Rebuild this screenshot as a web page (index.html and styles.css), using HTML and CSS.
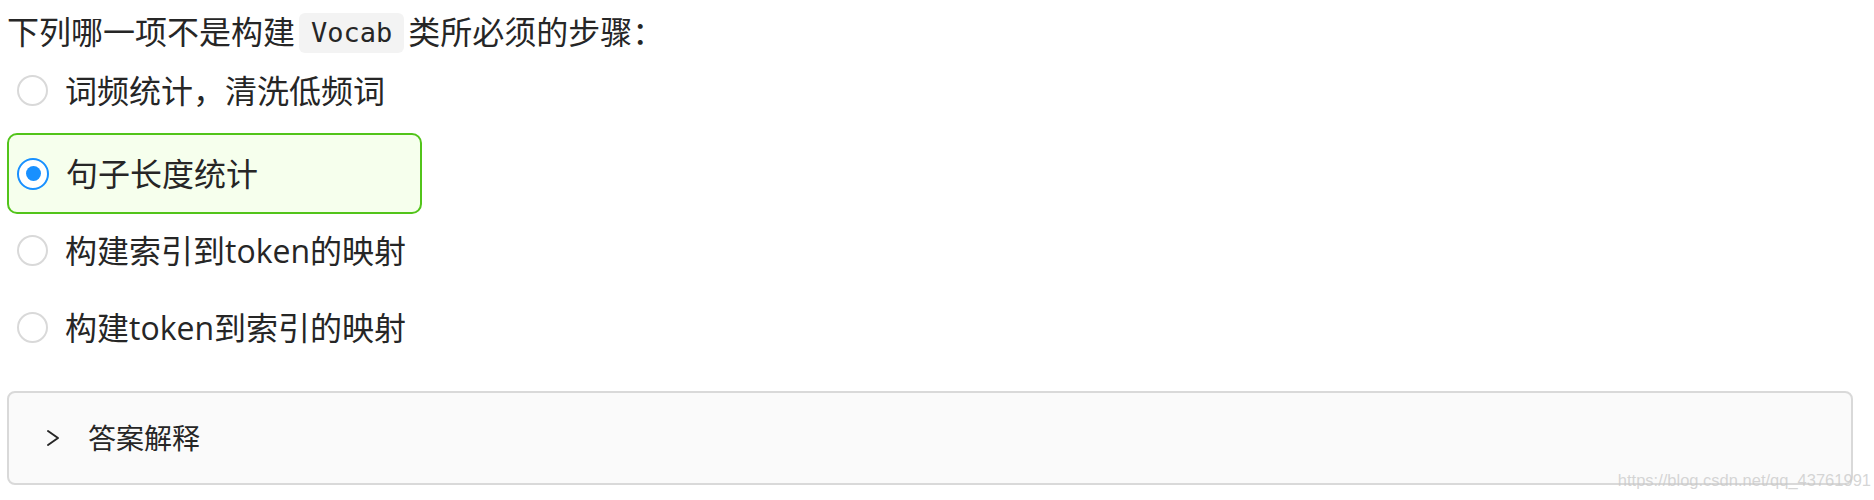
FILE: index.html
```html
<!DOCTYPE html>
<html lang="zh-CN">
<head>
<meta charset="utf-8">
<title>Quiz</title>
<link rel="stylesheet" href="styles.css">
</head>
<body>
<div class="quiz">
  <p class="question">下列哪一项不是构建<code class="code">Vocab</code>类所必须的步骤：</p>
  <div class="options">
    <label class="option"><span class="radio"></span><span class="option-text">词频统计，清洗低频词</span></label>
    <label class="option selected"><span class="radio"></span><span class="option-text">句子长度统计</span></label>
    <label class="option"><span class="radio"></span><span class="option-text">构建索引到token的映射</span></label>
    <label class="option"><span class="radio"></span><span class="option-text">构建token到索引的映射</span></label>
  </div>
  <div class="collapse">
    <div class="collapse-header">
      <svg class="chevron" width="16" height="18" viewBox="0 0 16 18"><polyline points="3,2 13,9 3,16" fill="none" stroke="#262626" stroke-width="2" stroke-linecap="round" stroke-linejoin="round"/></svg>
      <span class="collapse-title">答案解释</span>
    </div>
  </div>
  <div class="watermark">https://blog.csdn.net/qq_43761991</div>
</div>
</body>
</html>
```
FILE: styles.css
```css
html, body {
  margin: 0;
  background: #ffffff;
}
body {
  font-family: "Open Sans", "Noto Sans CJK SC", sans-serif;
  color: #262626;
}
.quiz {
  position: relative;
  height: 500px;
  box-sizing: border-box;
  padding: 0 21px 0 7px;
}
.question {
  margin: 0;
  padding-top: 11px;
  height: 41px;
  display: flex;
  align-items: center;
  font-size: 32px;
  line-height: 41px;
  white-space: nowrap;
}
.code {
  font-family: "DejaVu Sans Mono", "Liberation Mono", monospace;
  font-size: 27px;
  background: #f3f3f3;
  border-radius: 6px;
  padding: 0 12px;
  margin: 0 4px;
  height: 40px;
  line-height: 40px;
  margin-top: 2px;
}
.options {
  display: flex;
  flex-direction: column;
}
.option {
  display: flex;
  align-items: center;
  width: 415px;
  height: 77px;
  box-sizing: border-box;
  padding-left: 8px;
  border: 2.5px solid transparent;
  border-radius: 10px;
  font-size: 32px;
  white-space: nowrap;
}
.option-text {
  padding-bottom: 4px;
}
.option.selected {
  height: 81px;
  margin: 4px 0 -2px;
  border-color: #52c41a;
  background: #f6ffed;
}
.radio {
  flex: none;
  width: 31px;
  height: 31px;
  box-sizing: border-box;
  border: 2px solid #d9d9d9;
  border-radius: 50%;
  margin-right: 17px;
  display: flex;
  align-items: center;
  justify-content: center;
  background: #fff;
}
.selected .radio {
  border-color: #1890ff;
  width: 32px;
  height: 32px;
  border-width: 2.5px;
}
.selected .radio::after {
  content: "";
  width: 15px;
  height: 15px;
  border-radius: 50%;
  background: #1890ff;
}
.collapse {
  margin-top: 25px;
  height: 94px;
  box-sizing: border-box;
  border: 2px solid #d9d9d9;
  border-radius: 8px;
  background: #fafafa;
}
.collapse-header {
  height: 100%;
  display: flex;
  align-items: center;
  padding-left: 36px;
}
.chevron {
  flex: none;
  margin-right: 27px;
}
.collapse-title {
  font-size: 28px;
  color: #262626;
  padding-bottom: 3px;
}
.watermark {
  position: absolute;
  right: 3px;
  top: 470px;
  font-family: "Liberation Sans", sans-serif;
  font-size: 16.5px;
  line-height: 20px;
  color: rgba(200, 200, 200, 0.75);
  white-space: nowrap;
}
```
